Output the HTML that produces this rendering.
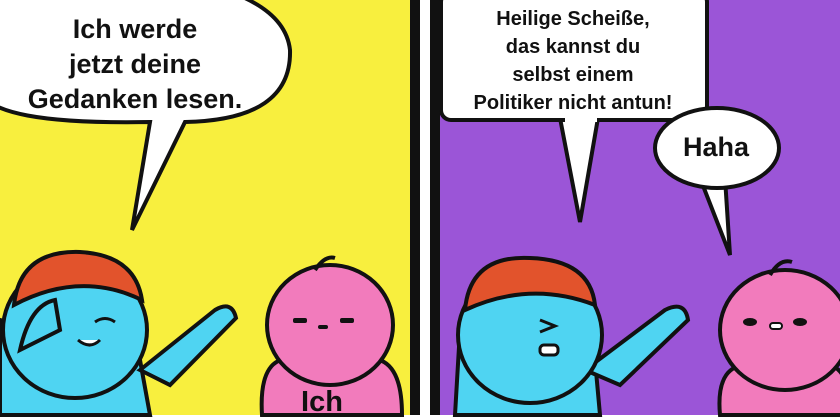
<!DOCTYPE html>
<html><head><meta charset="utf-8"><style>
html,body{margin:0;padding:0;background:#fff;}
svg{display:block;}
text{font-family:"Liberation Sans",sans-serif;font-weight:bold;fill:#111;}
</style></head><body>
<svg width="840" height="418" viewBox="0 0 840 418" xmlns="http://www.w3.org/2000/svg">
<rect width="840" height="418" fill="#fff"/>
<rect x="0" y="0" width="410" height="415" fill="#f8ef3e"/>
<rect x="410" y="0" width="10" height="415" fill="#111"/>
<rect x="430" y="0" width="10" height="415" fill="#111"/>
<rect x="440" y="0" width="400" height="415" fill="#9b55d7"/>

<!-- left bubble -->
<path d="M-20,-30 Q280,-40 290,50 Q292,120 185,122 L132,230 L150,122 Q-10,125 -20,90 Z" fill="#fff" stroke="#111" stroke-width="4"/>
<text x="135" y="38" font-size="27" text-anchor="middle">Ich werde</text>
<text x="135" y="73" font-size="27" text-anchor="middle">jetzt deine</text>
<text x="135" y="108" font-size="27" text-anchor="middle">Gedanken lesen.</text>

<!-- left blue char -->
<g stroke="#111" stroke-width="4">
<path d="M140,360 L150,415 L0,415 L0,320 Z" fill="#4fd4f2"/>
<path d="M140,370 L215,310 Q232,300 236,318 L170,385 Z" fill="#4fd4f2"/>
<ellipse cx="75" cy="330" rx="72" ry="68" fill="#4fd4f2"/>
<path d="M14,305 Q20,250 80,252 Q135,255 142,300 Q80,270 14,305 Z" fill="#e2532c"/>
<path d="M20,350 Q30,305 55,300 L60,330 Z" fill="#4fd4f2"/>
</g>
<path d="M95,322 Q105,315 115,322" stroke="#111" stroke-width="3" fill="none"/>
<path d="M78,340 Q90,350 100,340" stroke="#111" stroke-width="3" fill="#fff"/>

<!-- left pink char -->
<g stroke="#111" stroke-width="4">
<path d="M262,415 Q258,350 300,360 L360,360 Q402,350 402,415 Z" fill="#f27bbc"/>
<ellipse cx="330" cy="325" rx="63" ry="60" fill="#f27bbc"/>
<path d="M315,270 Q325,255 335,258" fill="none"/>
</g>
<rect x="293" y="318" width="14" height="5" rx="2" fill="#111"/>
<rect x="340" y="318" width="14" height="5" rx="2" fill="#111"/>
<rect x="318" y="325" width="10" height="4" rx="2" fill="#111"/>
<text x="322" y="411" font-size="29" text-anchor="middle">Ich</text>

<!-- right bubble rect -->
<path d="M598,118 L580,222 L560,118" fill="#fff" stroke="#111" stroke-width="4"/>
<rect x="441" y="-8" width="266" height="128" rx="10" fill="#fff" stroke="#111" stroke-width="4"/>
<rect x="565" y="112" width="32" height="10" fill="#fff"/>
<text x="573" y="25" font-size="20" text-anchor="middle">Heilige Scheiße,</text>
<text x="573" y="53" font-size="20" text-anchor="middle">das kannst du</text>
<text x="573" y="81" font-size="20" text-anchor="middle">selbst einem</text>
<text x="573" y="109" font-size="20" text-anchor="middle">Politiker nicht antun!</text>

<!-- Haha bubble -->
<path d="M700,178 L730,255 L725,178 Z" fill="#fff" stroke="#111" stroke-width="4"/>
<ellipse cx="717" cy="148" rx="62" ry="40" fill="#fff" stroke="#111" stroke-width="4"/>
<rect x="703" y="170" width="22" height="12" fill="#fff"/>
<text x="716" y="156" font-size="27" text-anchor="middle">Haha</text>

<!-- right blue char -->
<g stroke="#111" stroke-width="4">
<path d="M595,360 L600,415 L455,415 L460,330 Z" fill="#4fd4f2"/>
<path d="M585,370 L665,310 Q685,300 688,320 L620,385 Z" fill="#4fd4f2"/>
<ellipse cx="530" cy="335" rx="72" ry="68" fill="#4fd4f2"/>
<path d="M465,310 Q470,255 530,258 Q590,260 595,305 Q530,280 465,310 Z" fill="#e2532c"/>
</g>
<path d="M540,320 L555,326 L540,332" stroke="#111" stroke-width="3" fill="none"/>
<rect x="540" y="345" width="18" height="10" rx="4" fill="#fff" stroke="#111" stroke-width="3"/>

<!-- right pink char -->
<g stroke="#111" stroke-width="4">
<path d="M720,415 Q715,360 755,365 L820,365 Q850,360 850,415 Z" fill="#f27bbc"/>
<ellipse cx="785" cy="330" rx="65" ry="60" fill="#f27bbc"/>
<path d="M770,275 Q780,258 792,262" fill="none"/>
</g>
<ellipse cx="750" cy="322" rx="7" ry="4" fill="#111"/>
<ellipse cx="800" cy="322" rx="7" ry="4" fill="#111"/>
<rect x="770" y="323" width="12" height="6" rx="3" fill="#fff" stroke="#111" stroke-width="2"/>
</svg>
</body></html>
